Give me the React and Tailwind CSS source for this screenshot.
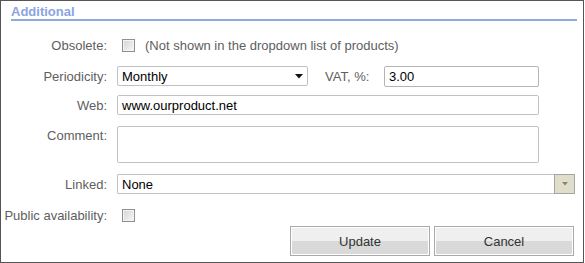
import React from "react";

function CheckBox() {
  return (
    <span className="inline-block w-[13px] h-[13px] border border-[#8f8f8f] bg-gradient-to-br from-[#d4d4d4] to-[#f8f8f8] shadow-[inset_0_0_0_1px_#f4f4f4]" />
  );
}

function Label({ children, top }) {
  return (
    <div
      className={`w-[106px] shrink-0 text-right text-[#5e5e5e] whitespace-nowrap ${
        top ? "self-start pt-[3px]" : ""
      }`}
    >
      {children}
    </div>
  );
}

function GlossButton({ children }) {
  return (
    <button className="w-[140px] h-[30px] border border-[#a9a9a9] p-0 bg-white">
      <div className="h-full w-full border border-white flex flex-col relative">
        <div className="h-1/2 bg-[#efefef]" />
        <div className="h-1/2 bg-[#d9d9d9]" />
        <span className="absolute inset-0 flex items-center justify-center text-[#333]">
          {children}
        </span>
      </div>
    </button>
  );
}

export default function App() {
  return (
    <div
      className="w-[584px] h-[263px] bg-white border border-[#555] text-[13px] leading-none"
      style={{ fontFamily: '"Liberation Sans", Arial, sans-serif' }}
    >
      <div className="pl-[10px] pr-[6px] pt-[4px]">
        <div className="text-[13px] font-bold text-[#8aa5e0] h-[14px]">Additional</div>
        <div className="h-[2px] bg-[#8eaadf]" />
      </div>

      <div className="mt-[14px] flex items-center h-[20px]">
        <Label>Obsolete:</Label>
        <div className="ml-[15px] flex items-center">
          <CheckBox />
          <span className="ml-[10px] text-[#5e5e5e] whitespace-nowrap">
            (Not shown in the dropdown list of products)
          </span>
        </div>
      </div>

      <div className="mt-[11px] flex items-center h-[20px]">
        <Label>Periodicity:</Label>
        <div className="ml-[10px] w-[191px] h-[20px] border border-[#c2c2c2] rounded-[2px] flex items-center justify-between pl-[4px] pr-[4px] text-black">
          <span>Monthly</span>
          <svg width="8" height="5" viewBox="0 0 8 5">
            <path d="M0 0H8L4 4.5Z" fill="#111" />
          </svg>
        </div>
        <div className="ml-[17px] w-[59px] text-[#5e5e5e] whitespace-nowrap">VAT, %:</div>
        <div className="w-[155px] h-[21px] border border-[#b5b5b5] rounded-[2px] flex items-center pl-[4px] text-black">
          3.00
        </div>
      </div>

      <div className="mt-[9px] flex items-center h-[20px]">
        <Label>Web:</Label>
        <div className="ml-[10px] w-[422px] h-[20px] border border-[#c2c2c2] rounded-[2px] flex items-center pl-[4px] text-black">
          www.ourproduct.net
        </div>
      </div>

      <div className="mt-[11px] flex h-[37px]">
        <Label top>Comment:</Label>
        <div className="ml-[10px] w-[422px] h-[37px] border border-[#c2c2c2] rounded-[2px]" />
      </div>

      <div className="mt-[11px] flex items-center h-[20px]">
        <Label>Linked:</Label>
        <div className="ml-[10px] w-[458px] h-[20px] flex">
          <div className="flex-1 border border-[#c2c2c2] border-r-0 rounded-l-[2px] flex items-center pl-[4px] text-black">
            None
          </div>
          <div className="w-[21px] h-[20px] bg-[#e0ddcb] border border-[#a5a5a5] flex items-center justify-center">
            <svg width="6" height="4" viewBox="0 0 6 4">
              <path d="M0 0H6L3 3.5Z" fill="#8b8763" />
            </svg>
          </div>
        </div>
      </div>

      <div className="mt-[11px] flex items-center h-[20px]">
        <Label>Public availability:</Label>
        <div className="ml-[15px] flex items-center">
          <CheckBox />
        </div>
      </div>

      <div className="mt-[1px] flex justify-end gap-[4px] pr-[9px]">
        <GlossButton>Update</GlossButton>
        <GlossButton>Cancel</GlossButton>
      </div>
    </div>
  );
}
